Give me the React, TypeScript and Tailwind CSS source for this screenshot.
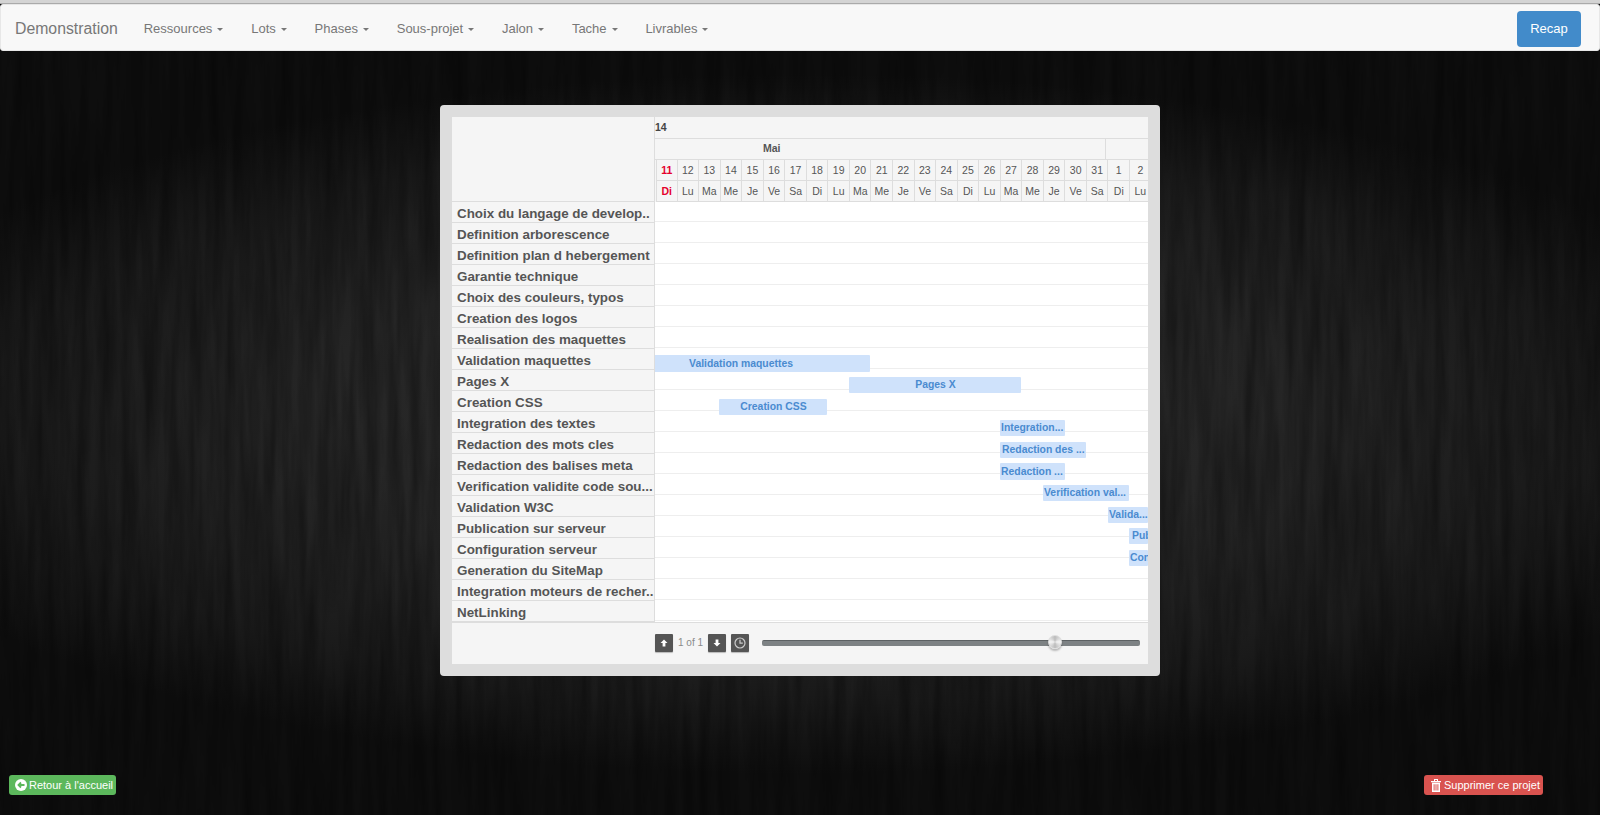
const navItems = ["Ressources", "Lots", "Phases", "Sous-projet", "Jalon", "Tache", "Livrables"];

const tasks = [
  "Choix du langage de develop..",
  "Definition arborescence",
  "Definition plan d hebergement",
  "Garantie technique",
  "Choix des couleurs, typos",
  "Creation des logos",
  "Realisation des maquettes",
  "Validation maquettes",
  "Pages X",
  "Creation CSS",
  "Integration des textes",
  "Redaction des mots cles",
  "Redaction des balises meta",
  "Verification validite code sou...",
  "Validation W3C",
  "Publication sur serveur",
  "Configuration serveur",
  "Generation du SiteMap",
  "Integration moteurs de recher..",
  "NetLinking",
];

const bars = [
  { top: 153, left: -44, width: 259, height: 17, label: "Validation maquettes", center: true },
  { top: 175, left: 194, width: 172, height: 16, label: "Pages X", center: true },
  { top: 197, left: 64, width: 108, height: 16, label: "Creation CSS", center: true },
  { top: 218, left: 345, width: 65, height: 16, label: "Integration..." },
  { top: 240, left: 345, width: 86, height: 16, label: "Redaction des ...", indent: 2 },
  { top: 261, left: 345, width: 65, height: 17, label: "Redaction ..." },
  { top: 283, left: 388, width: 86, height: 16, label: "Verification val..." },
  { top: 305, left: 453, width: 40, height: 16, label: "Valida..." },
  { top: 326, left: 474, width: 19, height: 16, label: "Pub", indent: 3 },
  { top: 348, left: 474, width: 19, height: 16, label: "Con" },
];

const dayNums = [11, 12, 13, 14, 15, 16, 17, 18, 19, 20, 21, 22, 23, 24, 25, 26, 27, 28, 29, 30, 31, 1, 2];
const dayNames = ["Di", "Lu", "Ma", "Me", "Je", "Ve", "Sa"];

function Caret() {
  return <span className="ml-[5px] inline-block border-x-[3px] border-t-[3px] border-x-transparent border-t-[#777] align-middle" />;
}

function NavBar() {
  return (
    <nav className="flex h-[47px] items-center rounded-[3px] border border-[#e7e7e7] bg-[#f8f8f8] pl-[14px] pr-[18px] pt-[2px] text-[13px] text-[#777]">
      <span className="mr-[26px] text-[15.8px]">Demonstration</span>
      <div className="flex items-center gap-[27.8px]">
        {navItems.map((item) => (
          <span key={item}>
            {item}
            <Caret />
          </span>
        ))}
      </div>
      <button className="ml-auto h-[36px] w-[64px] rounded-[4px] bg-[#428bca] text-[13px] text-white">Recap</button>
    </nav>
  );
}

function DayCells({ labels }: { labels: (string | number)[] }) {
  return (
    <div className="ml-[1px] flex h-[21px] w-[520px] border-b border-[#ddd] text-[10.5px] text-[#555]">
      {labels.map((label, i) => (
        <div key={i} className={`flex w-[21.55px] shrink-0 items-center justify-center border-r border-[#ddd] pt-[2px] ${i === 0 ? "border-l font-bold text-[#e5002b]" : ""}`}>
          {label}
        </div>
      ))}
    </div>
  );
}

function TimelineHeader() {
  return (
    <div className="flex h-[85px] bg-[#f5f5f5] text-[#444]">
      <div className="w-[203px] shrink-0 border-b border-r border-[#ddd]" />
      <div className="min-w-0 flex-1 overflow-hidden">
        <div className="flex h-[22px] items-center border-b border-[#ddd] text-[10.5px] font-bold leading-none">14</div>
        <div className="flex h-[21px] border-b border-[#ddd] text-[10.5px] font-bold text-[#555]">
          <div className="flex w-[451px] shrink-0 items-center border-r border-[#ddd] pl-[108px]">Mai</div>
        </div>
        <DayCells labels={dayNums} />
        <DayCells labels={dayNums.map((_, i) => dayNames[i % 7])} />
      </div>
    </div>
  );
}

function Timeline() {
  return (
    <div className="relative min-w-0 flex-1 overflow-hidden bg-white">
      {tasks.map((name, i) => (
        <div key={name} className={`border-b border-[#eee] ${i === 0 ? "h-[20px]" : "h-[21px]"}`} />
      ))}
      {bars.map((bar) => (
        <div
          key={bar.label}
          className={`absolute flex items-center overflow-hidden whitespace-nowrap rounded-[1px] bg-[#cfe2fb] text-[10.4px] font-bold text-[#4a8bd0] ${bar.center ? "justify-center" : ""}`}
          style={{ top: bar.top, left: bar.left, width: bar.width, height: bar.height, paddingLeft: bar.indent ?? 1 }}
        >
          {bar.label}
        </div>
      ))}
    </div>
  );
}

function ArrowGlyph({ down }: { down?: boolean }) {
  return (
    <svg width="8" height="8" viewBox="0 0 8 8" fill="#fff" className={down ? "rotate-180" : ""}>
      <path d="M4 0.5 7.5 4H5.4V7.5H2.6V4H0.5Z" />
    </svg>
  );
}

function Toolbar() {
  const btn = "flex h-[18px] w-[18px] items-center justify-center rounded-[1px] bg-[#555] shadow-[0_1px_1px_rgba(0,0,0,0.25)]";
  return (
    <div className="flex h-[42px] items-center border-t border-[#ddd] bg-[#f5f5f5] pb-[2px]">
      <div className="ml-[203px] flex items-center">
        <span className={btn}><ArrowGlyph /></span>
        <span className="ml-[5px] mr-[5px] text-[10px] text-[#8a8a8a]">1 of 1</span>
        <span className={btn}><ArrowGlyph down /></span>
        <span className={`${btn} ml-[5px]`}>
          <svg width="12" height="12" viewBox="0 0 12 12" fill="none" stroke="#ccc" strokeWidth="1.2">
            <circle cx="6" cy="6" r="5" />
            <path d="M6 2.8V6.2H8.8" />
          </svg>
        </span>
      </div>
      <div className="relative ml-[13px] h-[6px] w-[378px] rounded-[2px] border-t border-[#5c6163] bg-[#7d8284]">
        <span className="absolute left-[286px] top-[-6px] h-[14px] w-[14px] rounded-full border border-[#ddd] bg-[conic-gradient(#bbb,#f4f4f4,#bbb,#f4f4f4,#bbb)] shadow-[0_2px_2px_rgba(0,0,0,0.25)]" />
      </div>
    </div>
  );
}

export default function App() {
  return (
    <div className="relative flex h-[815px] flex-col overflow-hidden bg-[radial-gradient(ellipse_1000px_350px_at_50%_52%,#2c2c2c_0%,#252525_50%,#1a1a1a_80%,#0e0e0e_100%)] font-['Liberation_Sans',Arial,sans-serif]">
      {/* dark wood grain */}
      <svg className="absolute inset-0 h-full w-full">
        <filter id="wood">
          <feTurbulence type="fractalNoise" baseFrequency="0.09 0.007" numOctaves="3" seed="4" />
          <feColorMatrix values="0 0 0 0 0  0 0 0 0 0  0 0 0 0 0  0 0 0 0.6 -0.15" />
        </filter>
        <rect width="100%" height="100%" filter="url(#wood)" />
      </svg>
      <div className="relative h-[4px] shrink-0 border-b border-[#aaa] bg-[#d4d4d4]" />
      <div className="relative">
        <NavBar />
      </div>
      <main className="relative flex flex-1 flex-col">
        <div className="mx-auto mt-[54px] h-[571px] w-[720px] rounded-[4px] bg-[#ddd] p-[12px]">
          <TimelineHeader />
          <div className="flex h-[420px]">
            <div className="w-[203px] shrink-0">
              {tasks.map((name) => (
                <div key={name} className="h-[21px] overflow-hidden whitespace-nowrap border-b border-r border-[#ddd] bg-[#f5f5f5] pl-[5px] text-[13.4px] font-bold leading-[23px] text-[#555]">
                  {name}
                </div>
              ))}
            </div>
            <Timeline />
          </div>
          <Toolbar />
        </div>
        <div className="mb-[20px] mt-auto flex items-center justify-between pl-[9px] pr-[57px]">
          <button className="flex h-[20px] w-[107px] items-center gap-[2px] rounded-[3px] bg-[#5cb85c] pl-[6px] text-[11px] text-white">
            <svg width="12" height="12" viewBox="0 0 12 12">
              <circle cx="6" cy="6" r="6" fill="#fff" />
              <path d="M9.5 6H4M6 3.5 3.5 6 6 8.5" fill="none" stroke="#5cb85c" strokeWidth="1.8" />
            </svg>
            Retour à l'accueil
          </button>
          <button className="flex h-[20px] w-[119px] items-center gap-[3px] rounded-[3px] bg-[#d9534f] pl-[7px] text-[11px] text-white">
            <svg width="10" height="13" viewBox="0 0 10 13" fill="#fff">
              <path d="M0 2h10v1.2H0zM3 0h4v2H6V1H4v1H3zM1 3.8h8V13H1zM2.6 5.2v6.4h1V5.2zM4.5 5.2v6.4h1V5.2zM6.4 5.2v6.4h1V5.2z" fillRule="evenodd" />
            </svg>
            Supprimer ce projet
          </button>
        </div>
      </main>
    </div>
  );
}
